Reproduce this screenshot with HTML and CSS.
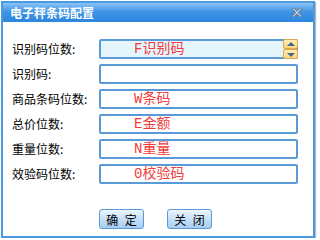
FILE: index.html
```html
<!DOCTYPE html>
<html lang="zh-CN">
<head>
    <meta charset="UTF-8">
    <title>电子秤条码配置</title>
    <link rel="stylesheet" href="styles.css">
</head>
<body>
    <div class="dialog">
        <div class="titlebar">
            <span class="title">电子秤条码配置</span>
            <svg class="close" width="10" height="9" viewBox="0 0 10 9">
                <path d="M1.5 1 L8.5 8 M8.5 1 L1.5 8" stroke="#5d7894" stroke-width="3" stroke-linecap="round"/>
                <path d="M1.5 1 L8.5 8 M8.5 1 L1.5 8" stroke="#b9c8d8" stroke-width="1.4" stroke-linecap="round"/>
            </svg>
        </div>
        <div class="content">
            <div class="form">
                <label>识别码位数:</label>
                <div class="field spin">
                    <span class="value">F识别码</span>
                    <div class="spinner">
                        <div class="arrow up"></div>
                        <div class="arrow down"></div>
                    </div>
                </div>

                <label>识别码:</label>
                <div class="field"><span class="value"></span></div>

                <label>商品条码位数:</label>
                <div class="field"><span class="value">W条码</span></div>

                <label>总价位数:</label>
                <div class="field"><span class="value">E金额</span></div>

                <label>重量位数:</label>
                <div class="field"><span class="value">N重量</span></div>

                <label>效验码位数:</label>
                <div class="field"><span class="value">0校验码</span></div>
            </div>
            <div class="buttons">
                <button class="btn">确 定</button>
                <button class="btn">关 闭</button>
            </div>
        </div>
    </div>
</body>
</html>
```

FILE: styles.css
```css
body {
    margin: 0;
    padding: 1px 0 0 1px;
    background-color: #fff;
    font-family: "Noto Sans CJK SC", sans-serif;
}

.dialog {
    width: 314px;
    height: 237px;
    box-sizing: border-box;
    border: 2px solid #4a9ae2;
    background-color: #fff;
    box-shadow: 1px 1px 1px #b8b8b8;
}

.titlebar {
    height: 19px;
    display: flex;
    align-items: center;
    justify-content: space-between;
    padding: 0 11px 0 7px;
    background: linear-gradient(#8cc4f4, #3f95e6 45%, #2c86e0);
}

.title {
    color: #fff;
    font-size: 12px;
    font-weight: bold;
    line-height: 19px;
}

.close {
    display: block;
}

.content {
    padding: 17px 0 0 9px;
}

.form {
    display: grid;
    grid-template-columns: 87px 199px;
    grid-auto-rows: 20px;
    row-gap: 5px;
    align-items: center;
}

.form label {
    font-size: 12px;
    color: #000;
    line-height: 20px;
}

.field {
    height: 20px;
    box-sizing: border-box;
    border: 2px solid #5a9ad8;
    border-radius: 2px;
    display: flex;
    align-items: center;
    padding-left: 33px;
    background-color: #fff;
}

.field.spin {
    background-color: #e4f5fc;
    padding-right: 0;
}

.value {
    flex: 1;
    color: #f23c3c;
    font-family: "Liberation Mono", "Noto Sans CJK SC", monospace;
    font-size: 14px;
    line-height: 16px;
}

.spinner {
    width: 15px;
    height: 20px;
    margin: -2px -2px -2px 0;
    display: flex;
    flex-direction: column;
}

.arrow {
    flex: 1;
    box-sizing: border-box;
    border: 1px solid #e0a84a;
    border-radius: 2px;
    background: linear-gradient(#ffeeb8, #fcd67a);
    position: relative;
}

.arrow::after {
    content: "";
    position: absolute;
    left: 3px;
    border-left: 4px solid transparent;
    border-right: 4px solid transparent;
}

.arrow.up::after {
    top: 2px;
    border-bottom: 4px solid #45658f;
}

.arrow.down::after {
    top: 3px;
    border-top: 4px solid #45658f;
}

.buttons {
    display: flex;
    gap: 23px;
    padding: 25px 0 0 87px;
}

.btn {
    width: 45px;
    height: 20px;
    padding: 0 0 0 2px;
    border: 1px solid #5a9ad8;
    border-radius: 3px;
    background: linear-gradient(#eef6fe, #c6e0f8 50%, #a6cdf2);
    font-family: "Noto Sans CJK SC", sans-serif;
    font-size: 12px;
    letter-spacing: 2px;
    white-space: pre;
    color: #000;
}
```
